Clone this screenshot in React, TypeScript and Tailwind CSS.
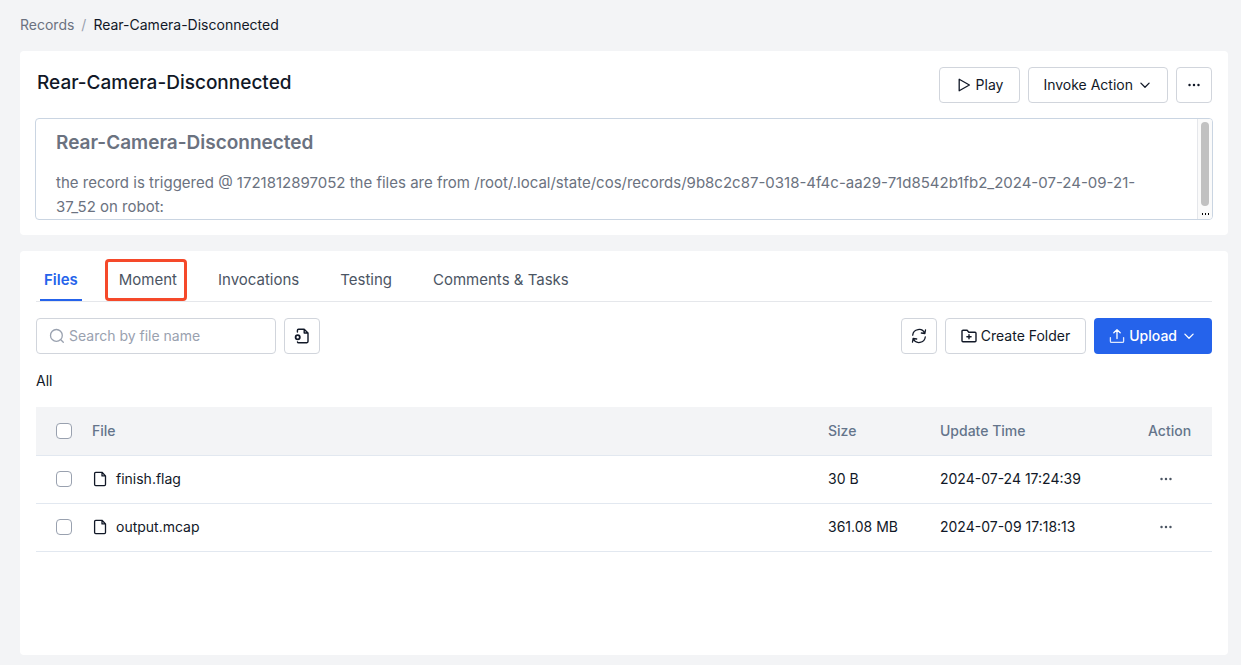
import type { ReactNode } from 'react';

type IconProps = { className?: string };

function Icon({ children, className = '' }: IconProps & { children: ReactNode }) {
  return (
    <svg
      viewBox="0 0 16 16"
      fill="none"
      stroke="currentColor"
      strokeWidth="1.3"
      strokeLinecap="round"
      strokeLinejoin="round"
      aria-hidden="true"
      className={`shrink-0 ${className || 'size-4'}`}
    >
      {children}
    </svg>
  );
}

const PlayIcon = () => (
  <Icon>
    <path d="M3.2 2.2v11.6L13.4 8z" />
  </Icon>
);

const ChevronIcon = () => (
  <Icon>
    <path d="M3.9 6.1 8 10.2l4.1-4.1" />
  </Icon>
);

const DotsIcon = () => (
  <Icon className="size-3.5">
    <g fill="currentColor" stroke="none">
      <circle cx="2.9" cy="8" r="1.4" />
      <circle cx="8" cy="8" r="1.4" />
      <circle cx="13.1" cy="8" r="1.4" />
    </g>
  </Icon>
);

const SearchIcon = () => (
  <Icon>
    <circle cx="7.4" cy="7.4" r="5.9" />
    <path d="m11.8 11.8 2.5 2.5" />
  </Icon>
);

const FileIcon = () => (
  <Icon>
    <path
      strokeWidth="1.3"
      d="M10 1.3H3.7c-.6 0-1.1.5-1.1 1.1v11.2c0 .6.5 1.1 1.1 1.1h8.7c.6 0 1.1-.5 1.1-1.1V4.9zv3.6h3.5"
    />
  </Icon>
);

const FileCogIcon = () => (
  <Icon>
    <path
      strokeWidth="1.4"
      d="M3.4 4V2.4c0-.6.5-1.1 1.1-1.1h5.7L14 5v8.6c0 .6-.5 1.1-1.1 1.1H4.5c-.5 0-.9-.3-1-.7M10.2 1.3V5H14"
    />
    <circle cx="3.7" cy="9.2" r="2.1" strokeWidth="1.8" />
  </Icon>
);

const RefreshIcon = () => (
  <Icon>
    <path d="M1.7 7.2A6.3 6.3 0 0 1 13.8 5.4M14.5 1.9l-.6 3.6-3.6-.5" />
    <path d="M14.3 8.8A6.3 6.3 0 0 1 2.2 10.6M1.5 14.1l.6-3.6 3.6.5" />
  </Icon>
);

const FolderPlusIcon = () => (
  <Icon>
    <path
      strokeWidth="1.4"
      d="M1 3.2c0-.6.4-1 1-1h4.1l1.7 2H14c.6 0 1 .4 1 1v7.6c0 .6-.4 1-1 1H2c-.6 0-1-.4-1-1z"
    />
    <path strokeWidth="1.4" d="M8 6.6v4.2M5.9 8.7h4.2" />
  </Icon>
);

const UploadIcon = () => (
  <Icon>
    <path d="M1.4 9.6v3.6c0 .7.5 1.2 1.2 1.2h10.8c.7 0 1.2-.5 1.2-1.2V9.6" opacity="0.85" />
    <path d="M8 10.6V1.6M4.8 4.8 8 1.6l3.2 3.2" />
  </Icon>
);

const outlined =
  'flex h-9 items-center justify-center rounded border border-gray-300 bg-white text-sm text-[#111827]';
const iconButton = `${outlined} w-9`;

const tabs = ['Files', 'Moment', 'Invocations', 'Testing', 'Comments & Tasks'];

const files = [
  { name: 'finish.flag', size: '30 B', updated: '2024-07-24 17:24:39' },
  { name: 'output.mcap', size: '361.08 MB', updated: '2024-07-09 17:18:13' },
];

function Checkbox({ label }: { label: string }) {
  return (
    <input
      type="checkbox"
      aria-label={label}
      className="block size-4 appearance-none rounded border border-gray-400 bg-white checked:border-[#2563eb] checked:bg-[#2563eb]"
    />
  );
}

function RecordHeader() {
  return (
    <section className="rounded bg-white px-[15px] pt-4 pb-[15px]">
      <div className="flex items-start justify-between">
        <h1 className="pt-0.5 pl-0.5 text-[19px] leading-7 font-medium text-[#111827]">
          Rear-Camera-Disconnected
        </h1>
        <div className="flex gap-2 pr-px">
          <button type="button" className={`${outlined} gap-1 px-4`}>
            <PlayIcon />
            Play
          </button>
          <button type="button" className={`${outlined} gap-1 px-3.5`}>
            Invoke Action
            <ChevronIcon />
          </button>
          <button type="button" aria-label="More" className={iconButton}>
            <DotsIcon />
          </button>
        </div>
      </div>
      <div className="mt-[15px] flex h-[102px] overflow-hidden rounded border border-slate-300 text-[#6b7280]">
        <div className="min-w-0 flex-1 pt-2.5 pr-7 pl-5">
          <h2 className="text-[19px] leading-7 font-semibold">Rear-Camera-Disconnected</h2>
          <p className="mt-3.5 text-[15px] leading-6">
            the record is triggered @ 1721812897052 the files are from
            /root/.local/state/cos/records/9b8c2c87-0318-4f4c-aa29-71d8542b1fb2_2024-07-24-09-21-37_52
            on robot:
          </p>
        </div>
        <div className="flex w-[15px] flex-col items-center border-l border-gray-200 bg-neutral-50 pt-[3px]">
          <div className="h-[84px] w-2 rounded-full bg-[#c1c1c1]" />
          <div className="mt-[7px] flex gap-0.5">
            <span className="h-0.5 w-px bg-black" />
            <span className="h-0.5 w-px bg-black" />
            <span className="h-0.5 w-px bg-black" />
          </div>
        </div>
      </div>
    </section>
  );
}

function Tabs() {
  return (
    <nav role="tablist" className="flex gap-[33px] border-b border-gray-200 px-1">
      {tabs.map((tab, index) => (
        <button
          key={tab}
          type="button"
          role="tab"
          aria-selected={index === 0}
          className={
            index === 0
              ? 'border-b-2 border-[#2563eb] px-1 pt-[17px] pb-[7px] text-[15px] leading-6 font-semibold text-[#2563eb]'
              : 'relative border-b-2 border-transparent px-1 pt-[17px] pb-[7px] text-[15px] leading-6 text-[#4b5563]'
          }
        >
          {tab}
          {tab === 'Moment' && (
            <span className="absolute top-2 -right-1.5 -bottom-0.5 -left-2.5 rounded border-3 border-[#f5492a]" />
          )}
        </button>
      ))}
    </nav>
  );
}

function FileTable() {
  return (
    <table className="w-full table-fixed border-collapse text-left text-sm text-[#111827]">
      <colgroup>
        <col className="w-12" />
        <col />
        <col className="w-28" />
        <col className="w-[200px]" />
        <col className="w-20" />
      </colgroup>
      <thead>
        <tr className="h-12 border-b border-slate-200 bg-gray-100 text-[#64748b]">
          <th className="pl-5">
            <Checkbox label="Select all files" />
          </th>
          <th className="px-2 font-medium">File</th>
          <th className="px-2 font-medium">Size</th>
          <th className="px-2 font-medium">Update Time</th>
          <th className="px-4 font-medium">Action</th>
        </tr>
      </thead>
      <tbody>
        {files.map((file) => (
          <tr key={file.name} className="h-12 border-b border-slate-200">
            <td className="pl-5">
              <Checkbox label={`Select ${file.name}`} />
            </td>
            <td className="px-2">
              <a href="#" className="flex items-center gap-2">
                <FileIcon />
                {file.name}
              </a>
            </td>
            <td className="px-2">{file.size}</td>
            <td className="px-2">{file.updated}</td>
            <td className="pl-[27px]">
              <button
                type="button"
                aria-label={`Actions for ${file.name}`}
                className="block text-[#4b5563]"
              >
                <DotsIcon />
              </button>
            </td>
          </tr>
        ))}
      </tbody>
    </table>
  );
}

export default function App() {
  return (
    <main className="flex min-h-screen flex-col bg-gray-100 pr-[13px] pb-2.5 pl-5 font-['Inter',sans-serif]">
      <nav aria-label="Breadcrumb" className="flex items-center gap-[7px] pt-[15px] pb-4 text-sm">
        <a href="#" className="text-[#6b7280]">
          Records
        </a>
        <span className="text-gray-400">/</span>
        <span className="text-[#111827]">Rear-Camera-Disconnected</span>
      </nav>
      <RecordHeader />
      <section className="mt-4 flex-1 rounded bg-white px-4">
        <Tabs />
        <div className="mt-4 flex items-center gap-2">
          <label className="flex h-9 w-60 items-center gap-1 rounded border border-gray-300 px-3 text-gray-400">
            <SearchIcon />
            <input
              type="text"
              aria-label="Search by file name"
              placeholder="Search by file name"
              className="min-w-0 flex-1 text-sm text-[#111827] outline-none placeholder:text-gray-400"
            />
          </label>
          <button type="button" aria-label="File settings" className={iconButton}>
            <FileCogIcon />
          </button>
          <div className="ml-auto flex gap-2">
            <button type="button" aria-label="Refresh" className={iconButton}>
              <RefreshIcon />
            </button>
            <button type="button" className={`${outlined} gap-1 px-[15px]`}>
              <FolderPlusIcon />
              Create Folder
            </button>
            <button
              type="button"
              className="flex h-9 items-center gap-1 rounded bg-[#2563eb] px-[15px] text-sm font-medium text-white"
            >
              <UploadIcon />
              Upload
              <ChevronIcon />
            </button>
          </div>
        </div>
        <p className="mt-[17px] mb-4 text-sm leading-5 text-[#111827]">All</p>
        <FileTable />
      </section>
    </main>
  );
}
